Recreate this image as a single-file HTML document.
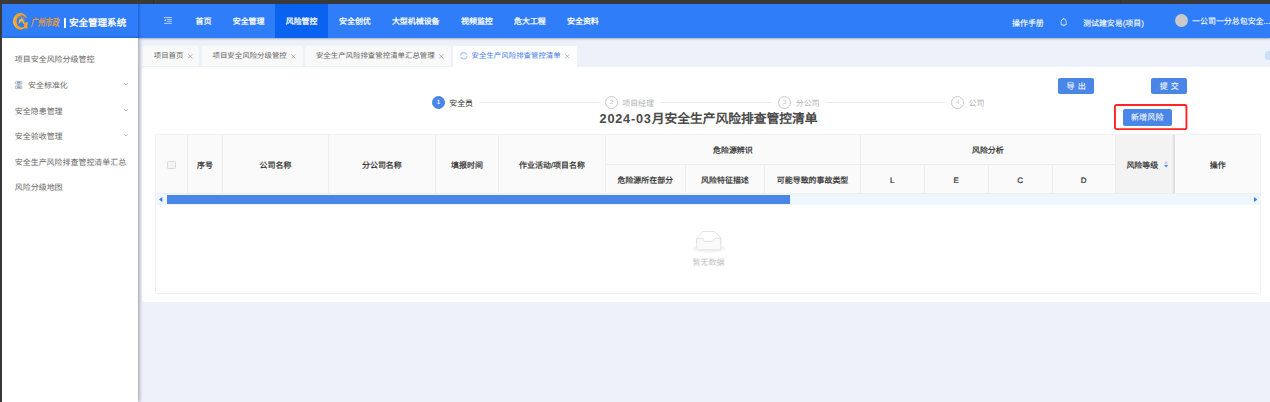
<!DOCTYPE html>
<html lang="zh-CN">
<head>
<meta charset="utf-8">
<title>安全管理系统 - 安全生产风险排查管控清单</title>
<style>
*{box-sizing:border-box;margin:0;padding:0}
html,body{width:1270px;height:402px;overflow:hidden}
body{position:relative;background:#edf1fa;font-family:"Liberation Sans",sans-serif;font-size:7.94px;color:#333;text-rendering:geometricPrecision;-webkit-font-smoothing:antialiased}
.abs,.t{position:absolute;display:block}
.t{white-space:nowrap;overflow:visible;height:12px;line-height:12px;margin-top:.15em}
svg{position:absolute;display:block;overflow:visible}

/* window chrome strips */
#topstrip{left:0;top:0;width:1270px;height:3.7px;background:#393a3b}
#topstripL{left:0;top:0;width:153.5px;height:3.7px;background:#3b3a38}
.tdiv{top:0;width:1.2px;height:3.7px;background:#2e2e2e}
#leftstrip{left:0;top:0;width:2px;height:402px;background:#393939}

/* header */
#header{left:2px;top:3.7px;width:1268px;height:34.1px;background:#2f7df9;box-shadow:0 0.8px 3px rgba(0,21,41,.24),0 1px 1.2px rgba(50,60,80,.16)}
#logoShade{left:138px;top:3.7px;width:3.4px;height:34.1px;background:linear-gradient(90deg,rgba(0,30,100,.30),rgba(0,30,100,.12) 60%,rgba(0,30,100,0))}
#navActive{left:275px;top:3.7px;width:53.2px;height:34.1px;background:#0a62f0}
.nav{color:#fff;font-size:7.94px;font-weight:normal;top:15.1px;-webkit-text-stroke:0.28px #fff}
.hr{color:#fff;font-size:7.94px;font-weight:normal;-webkit-text-stroke:0.12px #fff}
#brand{left:68.9px;top:16.1px;color:#fff;font-size:9.55px;font-weight:bold}
#brandbar{left:63.9px;top:18.2px;width:1.7px;height:9.5px;background:#fff}
#callig{left:30.6px;top:16.3px;font-size:10.1px;font-weight:normal;color:#f7a520;transform:scaleX(.70) skewX(-12deg);transform-origin:0 50%;-webkit-text-stroke:.25px #f59a1a}
#avatar{left:1175.1px;top:14.4px;width:13px;height:13px;border-radius:50%;background:#c9c9c9}

/* sidebar */
#sidebar{left:2px;top:37.8px;width:136.1px;height:364.2px;background:#fff;box-shadow:1.6px 0 3.6px rgba(0,21,41,.36)}
.si{left:14.8px;color:#666;font-size:7.96px}

/* tabs */
.tab{top:45.6px;height:20.9px;background:#f9f9f9;border-radius:2px 2px 0 0}
.tt{top:49.1px;font-size:7.43px;color:#666}
#tab4{background:#fff;height:23.1px}
#tab4t{color:#3f7ce8}

/* card */
#card{left:142.4px;top:67.2px;width:1140px;height:234.8px;background:#fff;border-radius:4px}

/* steps */
.sc{top:96.1px;width:12.9px;height:12.9px;border-radius:50%;border:0.8px solid #cacaca;color:#c6c6c6;font-size:6.1px;line-height:11.7px;text-align:center}
#sc1{background:#4886ea;border-color:#4886ea;color:#fff;font-weight:bold}
.st{top:97px;font-size:7.94px;color:#b3b3b3}
#st1{color:#303030}
.sl{top:102.4px;height:0.7px;background:#ebebeb}
#title{left:508.5px;width:400px;top:107px;height:20px;line-height:20px;text-align:center;font-size:12.76px;font-weight:bold;color:#4a4a4a}
#title b{letter-spacing:.77px;font-weight:bold}

/* buttons */
.btn{background:#4a86e8;border-radius:2px;color:#fff;font-size:8.1px;font-weight:normal;-webkit-text-stroke:0.06px #fff;text-align:center;white-space:nowrap;line-height:16.3px;height:16.3px;padding-top:1.3px;overflow:hidden}

.j{display:inline-block;white-space:nowrap;text-align-last:justify;vertical-align:top}

/* table */
#table{left:155.2px;top:134px;width:1105.6px;height:159.7px;border:1px solid #f1f1f1;border-radius:2px;background:#fff}
#thead{left:155.9px;top:134.7px;width:1104.3px;height:58.5px;background:#fafafa}
#sortcol{left:1115.3px;top:134.7px;width:59.2px;height:58.5px;background:#f3f3f3}
#fixshade{left:1171.5px;top:134.7px;width:3px;height:58.5px;background:linear-gradient(90deg,rgba(0,0,0,0),rgba(0,0,0,.13))}
.vl{top:134.7px;width:0.7px;height:58.5px;background:#eeeeee}
.vl2{top:164.5px;height:28.7px}
.hl{height:0.7px;background:#eeeeee}
.th{font-weight:normal;-webkit-text-stroke:0.22px #2b2b2b;color:#2b2b2b;font-size:7.94px;text-align:center}
#cb{left:167.3px;top:160.7px;width:8.6px;height:8.6px;border:0.7px solid #d9d9d9;border-radius:1.3px;background:#f5f5f5}
#track{left:155.9px;top:193.9px;width:1104.3px;height:11.5px;background:#eef6fe}
#thumb{left:166.8px;top:195px;width:623.2px;height:8.7px;background:#4a86e8}
#empty{left:692.6px;top:256.1px;font-size:7.94px;color:#c2c2c2}
#lockico{left:1265px;top:51px;width:10px;height:9px;border-radius:2px;background:#cfdffb}
</style>
</head>
<body>
<!-- header -->
<div class="abs" id="header"></div>
<div class="abs" id="navActive"></div>

<!-- logo -->
<svg id="emblem" style="left:13px;top:12.7px" width="14.8" height="16.7" viewBox="0 0 270 305">
  <path fill-rule="evenodd" fill="#f5a422" d="M0 152 A135 152 0 1 1 270 152 A135 152 0 1 1 0 152 Z M66 152 A92 112 0 1 0 250 152 A92 112 0 1 0 66 152 Z"/>
  <rect x="205" y="92" width="70" height="76" fill="#2f7df9"/>
  <path d="M44 62 A104 128 0 0 0 44 242" fill="none" stroke="#ffd468" stroke-width="13" opacity=".85"/>
  <path d="M190 172 L270 172 L270 198 L264 198 L264 284 L204 284 L204 198 L190 198 Z" fill="#f5a422"/>
  <path d="M84 84 Q140 44 196 84 L206 160" fill="none" stroke="#f29a1c" stroke-width="13" opacity=".9"/>
  <path d="M100 190 L124 96 L138 128 L152 70 L166 124 L181 90 L204 190 L182 190 L173 146 L161 176 L151 140 L141 176 L131 146 L121 190 Z" fill="#fbc02f"/>
</svg>
<span class="t" id="callig" style="width:40.40px;text-align-last:justify">广州市政</span>
<div class="abs" id="brandbar"></div>
<span class="t" id="brand" style="left:68.89px;width:57.33px;text-align-last:justify;text-align:left">安全管理系统</span>
<div class="abs" id="logoShade"></div>

<!-- menu fold icon -->
<svg style="left:164px;top:17.2px" width="7.8" height="7" viewBox="0 0 7.8 7">
  <g fill="#fff" opacity=".8"><rect x="0" y="0" width="7.8" height="0.8"/><rect x="3.1" y="1.95" width="4.7" height="0.8"/><rect x="3.1" y="3.85" width="4.7" height="0.8"/><rect x="0" y="5.9" width="7.8" height="0.8"/><path d="M0.1 3.3 L2.1 2 L2.1 4.6 Z"/></g>
</svg>

<span class="t nav" style="left:195.59px;width:15.93px;text-align-last:justify;text-align:left">首页</span>
<span class="t nav" style="left:232.69px;width:31.80px;text-align-last:justify;text-align:left">安全管理</span>
<span class="t nav" style="left:285.69px;width:31.80px;text-align-last:justify;text-align:left">风险管控</span>
<span class="t nav" style="left:339.00px;width:31.80px;text-align-last:justify;text-align:left">安全创优</span>
<span class="t nav" style="left:391.89px;width:47.67px;text-align-last:justify;text-align:left">大型机械设备</span>
<span class="t nav" style="left:461.00px;width:31.80px;text-align-last:justify;text-align:left">视频监控</span>
<span class="t nav" style="left:514.00px;width:31.80px;text-align-last:justify;text-align:left">危大工程</span>
<span class="t nav" style="left:567.00px;width:31.80px;text-align-last:justify;text-align:left">安全资料</span>

<span class="t hr" style="left:1012.00px;top:17px;width:31.80px;text-align-last:justify;text-align:left">操作手册</span>
<svg style="left:1059.5px;top:18px" width="7.4" height="8.6" viewBox="0 0 7.4 8.6">
  <path d="M1.2 6.5 L1.2 3.7 A2.5 2.8 0 0 1 6.2 3.7 L6.2 6.5 Z M3 7.6 Q3.7 8.3 4.4 7.6 M3.7 0.3 L3.7 0.9" fill="none" stroke="#fff" stroke-width="0.75" stroke-linejoin="round" stroke-linecap="round" opacity=".9"/>
</svg>
<span class="t hr" style="left:1083.00px;top:17px;width:60.91px;text-align-last:justify;text-align:left">测试建安易(项目)</span>
<div class="abs" id="avatar"></div>
<span class="t hr" style="left:1192.09px;top:15.1px;width:78.11px;text-align-last:justify;text-align:left">一公司一分总包安全...</span>

<!-- sidebar -->
<div class="abs" id="sidebar"></div>
<span class="t si" style="left:14.80px;top:53.1px;width:79.60px;text-align-last:justify;text-align:left">项目安全风险分级管控</span>
<svg style="left:14.8px;top:80.9px" width="7.4" height="8" viewBox="0 0 7.4 8">
  <rect x="0.4" y="0.4" width="6.6" height="2.7" rx="0.9" fill="#f2f2f2" stroke="#a6a6a6" stroke-width="0.8"/>
  <rect x="0.4" y="4.9" width="6.6" height="2.7" rx="0.9" fill="#f2f2f2" stroke="#a6a6a6" stroke-width="0.8"/>
  <rect x="2" y="1.25" width="3.5" height="1" fill="#4a86e8"/>
  <rect x="2" y="5.75" width="3.5" height="1" fill="#4a86e8"/>
  <path d="M2.7 3.2 L4.7 4.8 M4.7 3.2 L2.7 4.8" stroke="#a0a0a0" stroke-width="0.6"/>
</svg>
<span class="t si" style="left:28.00px;top:78.6px;width:39.83px;text-align-last:justify;text-align:left">安全标准化</span>
<span class="t si" style="left:14.80px;top:105px;width:47.78px;text-align-last:justify;text-align:left">安全隐患管理</span>
<span class="t si" style="left:14.80px;top:129.6px;width:47.78px;text-align-last:justify;text-align:left">安全验收管理</span>
<span class="t si" style="left:14.80px;top:156px;width:111.41px;text-align-last:justify;text-align:left">安全生产风险排查管控清单汇总</span>
<span class="t si" style="left:14.80px;top:180.6px;width:47.78px;text-align-last:justify;text-align:left">风险分级地图</span>
<svg style="left:124.1px;top:83px" width="3.8" height="2.4" viewBox="0 0 3.8 2.4"><path d="M0.3 0.3 L1.9 1.9 L3.5 0.3" fill="none" stroke="#8c8c8c" stroke-width="0.7"/></svg>
<svg style="left:124.1px;top:108.6px" width="3.8" height="2.4" viewBox="0 0 3.8 2.4"><path d="M0.3 0.3 L1.9 1.9 L3.5 0.3" fill="none" stroke="#8c8c8c" stroke-width="0.7"/></svg>
<svg style="left:124.1px;top:134px" width="3.8" height="2.4" viewBox="0 0 3.8 2.4"><path d="M0.3 0.3 L1.9 1.9 L3.5 0.3" fill="none" stroke="#8c8c8c" stroke-width="0.7"/></svg>

<!-- tabs -->
<div class="abs tab" style="left:142.6px;width:56.9px"></div>
<div class="abs tab" style="left:201.9px;width:101.2px"></div>
<div class="abs tab" style="left:304.9px;width:145.9px"></div>
<div class="abs tab" id="tab4" style="left:453.3px;width:123.8px"></div>
<span class="t tt" style="left:153.69px;width:29.75px;text-align-last:justify;text-align:left">项目首页</span>
<span class="t tt" style="left:212.50px;width:74.28px;text-align-last:justify;text-align:left">项目安全风险分级管控</span>
<span class="t tt" style="left:315.89px;width:118.82px;text-align-last:justify;text-align:left">安全生产风险排查管控清单汇总管理</span>
<span class="t tt" id="tab4t" style="left:471.59px;width:89.13px;text-align-last:justify;text-align:left">安全生产风险排查管控清单</span>
<svg class="x" style="left:187.7px;top:54px" width="4.6" height="4.6" viewBox="0 0 4.6 4.6"><path d="M0.2 0.2 L4.4 4.4 M4.4 0.2 L0.2 4.4" stroke="#8f8f8f" stroke-width="0.62"/></svg>
<svg class="x" style="left:290.7px;top:54px" width="4.6" height="4.6" viewBox="0 0 4.6 4.6"><path d="M0.2 0.2 L4.4 4.4 M4.4 0.2 L0.2 4.4" stroke="#8f8f8f" stroke-width="0.62"/></svg>
<svg class="x" style="left:438.8px;top:54px" width="4.6" height="4.6" viewBox="0 0 4.6 4.6"><path d="M0.2 0.2 L4.4 4.4 M4.4 0.2 L0.2 4.4" stroke="#8f8f8f" stroke-width="0.62"/></svg>
<svg class="x" style="left:564.5px;top:54px" width="4.6" height="4.6" viewBox="0 0 4.6 4.6"><path d="M0.2 0.2 L4.4 4.4 M4.4 0.2 L0.2 4.4" stroke="#8f8f8f" stroke-width="0.62"/></svg>
<svg style="left:459.8px;top:52.4px" width="7.6" height="7.6" viewBox="0 0 7.6 7.6"><circle cx="3.8" cy="3.8" r="3.2" fill="none" stroke="#a3c4fa" stroke-width="1.15" stroke-dasharray="8.6 1.45"/></svg>
<div class="abs" id="lockico"></div>

<!-- card -->
<div class="abs" id="card"></div>

<!-- steps -->
<div class="abs sc" id="sc1" style="left:432px">1</div>
<div class="abs sc" style="left:605px">2</div>
<div class="abs sc" style="left:778.2px">3</div>
<div class="abs sc" style="left:951.3px">4</div>
<span class="t st" id="st1" style="left:449.19px;width:23.86px;text-align-last:justify;text-align:left">安全员</span>
<span class="t st" style="left:622.19px;width:31.80px;text-align-last:justify;text-align:left">项目经理</span>
<span class="t st" style="left:795.69px;width:23.86px;text-align-last:justify;text-align:left">分公司</span>
<span class="t st" style="left:968.59px;width:15.93px;text-align-last:justify;text-align:left">公司</span>
<div class="abs sl" style="left:479.2px;width:119.7px"></div>
<div class="abs sl" style="left:660.6px;width:110.9px"></div>
<div class="abs sl" style="left:826px;width:119.1px"></div>
<div class="t" id="title" style="left:599.53px;width:217.99px;text-align-last:justify;text-align:left"><b>2024-03</b>月安全生产风险排查管控清单</div>

<!-- buttons -->
<div class="abs btn" style="left:1058.3px;top:77.7px;width:35.7px"><span class="j" style="width:19.2px">导出</span></div>
<div class="abs btn" style="left:1151.4px;top:77.7px;width:35.7px"><span class="j" style="width:19.2px">提交</span></div>
<svg id="redbox" style="left:1113.8px;top:104.2px" width="73.4" height="26.1" viewBox="0 0 73.4 26.1"><rect x="0.95" y="0.95" width="71.5" height="24.2" rx="1.6" fill="none" stroke="#ff2424" stroke-width="1.9"/></svg>
<div class="abs btn" style="left:1122.7px;top:109.3px;width:49.1px;padding-top:0.4px"><span class="j" style="width:32.5px">新增风险</span></div>

<!-- table -->
<div class="abs" id="table"></div>
<div class="abs" id="thead"></div>
<div class="abs" id="sortcol"></div>
<div class="abs vl" style="left:187.1px"></div>
<div class="abs vl" style="left:222.1px"></div>
<div class="abs vl" style="left:328.2px"></div>
<div class="abs vl" style="left:434.9px"></div>
<div class="abs vl" style="left:498.4px"></div>
<div class="abs vl" style="left:605px"></div>
<div class="abs vl vl2" style="left:684.9px"></div>
<div class="abs vl vl2" style="left:764.4px"></div>
<div class="abs vl" style="left:860.1px"></div>
<div class="abs vl vl2" style="left:923.9px"></div>
<div class="abs vl vl2" style="left:987.7px"></div>
<div class="abs vl vl2" style="left:1051.8px"></div>
<div class="abs vl" style="left:1115px"></div>
<div class="abs hl" style="left:605px;top:164.2px;width:510.3px"></div>
<div class="abs hl" style="left:156.2px;top:192.9px;width:1104.1px"></div>
<div class="abs" id="fixshade"></div>
<div class="abs" id="cb"></div>
<span class="t th" style="left:196.95px;top:158.5px;width:15.93px;text-align-last:justify;text-align:left">序号</span>
<span class="t th" style="left:259.56px;top:158.5px;width:31.80px;text-align-last:justify;text-align:left">公司名称</span>
<span class="t th" style="left:362.00px;top:158.5px;width:39.74px;text-align-last:justify;text-align:left">分公司名称</span>
<span class="t th" style="left:451.06px;top:158.5px;width:31.80px;text-align-last:justify;text-align:left">填报时间</span>
<span class="t th" style="left:519.12px;top:158.5px;width:65.77px;text-align-last:justify;text-align:left">作业活动/项目名称</span>
<span class="t th" style="left:713.00px;top:144.3px;width:39.74px;text-align-last:justify;text-align:left">危险源辨识</span>
<span class="t th" style="left:617.45px;top:174.2px;width:55.61px;text-align-last:justify;text-align:left">危险源所在部分</span>
<span class="t th" style="left:701.12px;top:174.2px;width:47.67px;text-align-last:justify;text-align:left">风险特征描述</span>
<span class="t th" style="left:776.81px;top:174.2px;width:71.49px;text-align-last:justify;text-align:left">可能导致的事故类型</span>
<span class="t th" style="left:971.95px;top:144.3px;width:31.80px;text-align-last:justify;text-align:left">风险分析</span>
<span class="t th" style="left:860.4px;width:63.8px;top:174.2px">L</span>
<span class="t th" style="left:924.2px;width:63.8px;top:174.2px">E</span>
<span class="t th" style="left:988px;width:64.1px;top:174.2px">C</span>
<span class="t th" style="left:1052.1px;width:63.2px;top:174.2px">D</span>
<span class="t th" style="left:1126.39px;top:158.5px;width:31.80px;text-align-last:justify;text-align:left">风险等级</span>
<svg style="left:1164px;top:161.2px" width="4.2" height="6.8" viewBox="0 0 4.2 6.8"><path d="M0 2.7 L2.1 0.2 L4.2 2.7 Z" fill="#c3c6cc"/><path d="M0 3.9 L2.1 6.5 L4.2 3.9 Z" fill="#4685ee"/></svg>
<span class="t th" style="left:1209.70px;top:158.5px;width:15.93px;text-align-last:justify;text-align:left">操作</span>

<!-- scrollbar -->
<div class="abs" id="track"></div>
<div class="abs" id="thumb"></div>
<svg style="left:158.9px;top:197.3px" width="3.3" height="5" viewBox="0 0 3.3 5"><path d="M3.3 0 L0 2.5 L3.3 5 Z" fill="#3b79e6"/></svg>
<svg style="left:1254px;top:197.1px" width="3.3" height="5" viewBox="0 0 3.3 5"><path d="M0 0 L3.3 2.5 L0 5 Z" fill="#3b79e6"/></svg>

<!-- empty state -->
<svg style="left:691.7px;top:231px" width="33.6" height="21.5" viewBox="0 0 64 41">
  <g transform="translate(0 1)" fill="none" fill-rule="evenodd">
    <ellipse fill="#f5f5f5" cx="32" cy="33" rx="32" ry="7"/>
    <g fill-rule="nonzero" stroke="#d9d9d9" stroke-width="1.4">
      <path d="M55 12.76L44.854 1.258C44.367.474 43.656 0 42.907 0H21.093c-.749 0-1.46.474-1.947 1.257L9 12.761V22h46v-9.24z" fill="#fff"/>
      <path d="M41.613 15.931c0-1.605.994-2.93 2.227-2.931H55v18.137C55 33.26 53.68 35 52.05 35h-40.1C10.32 35 9 33.259 9 31.137V13h11.16c1.233 0 2.227 1.323 2.227 2.928v.022c0 1.605 1.005 2.901 2.237 2.901h14.752c1.232 0 2.237-1.308 2.237-2.913v-.007z" fill="#fafafa"/>
    </g>
  </g>
</svg>
<span class="t" id="empty" style="left:692.59px;width:31.80px;text-align-last:justify;text-align:left">暂无数据</span>

<!-- window chrome strips (outside the page) -->
<div class="abs" id="topstrip"></div>
<div class="abs" id="topstripL"></div>
<div class="abs tdiv" style="left:153.3px"></div>
<div class="abs tdiv" style="left:1120px;background:#343434"></div>
<div class="abs" id="leftstrip"></div>
</body>
</html>
